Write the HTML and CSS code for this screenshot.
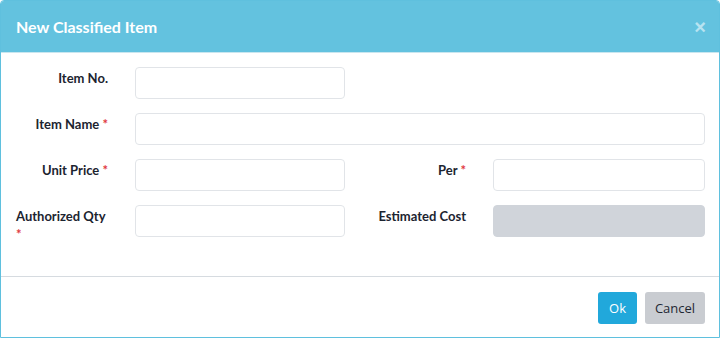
FILE: index.html
```html
<!DOCTYPE html>
<html lang="en">
<head>
    <meta charset="UTF-8">
    <meta name="viewport" content="width=device-width, initial-scale=1.0">
    <title>New Classified Item</title>
    <link rel="stylesheet" href="styles.css">
</head>
<body>
    <div class="modal">
        <div class="modal-header">
            <h4>New Classified Item</h4>
            <button class="close-btn">&times;</button>
        </div>

        <div class="modal-body">
            <div class="form-grid">
                <!-- Item No. -->
                <label class="field-label"><span>Item No.</span></label>
                <input class="field-input" type="text">
                <div></div>
                <div></div>

                <!-- Item Name -->
                <label class="field-label"><span>Item Name <em>*</em></span></label>
                <input class="field-input wide" type="text">

                <!-- Unit Price / Per -->
                <label class="field-label"><span>Unit Price <em>*</em></span></label>
                <input class="field-input" type="text">
                <label class="field-label"><span>Per <em>*</em></span></label>
                <input class="field-input" type="text">

                <!-- Authorized Qty / Estimated Cost -->
                <label class="field-label"><span>Authorized Qty <em>*</em></span></label>
                <input class="field-input" type="text">
                <label class="field-label"><span>Estimated Cost</span></label>
                <input class="field-input" type="text" disabled>
            </div>
        </div>

        <div class="modal-footer">
            <button class="btn btn-ok">Ok</button>
            <button class="btn btn-cancel">Cancel</button>
        </div>
    </div>
</body>
</html>
```

FILE: styles.css
```css
body {
    font-family: Lato, "Open Sans", sans-serif;
    margin: 0;
    background-color: #ffffff;
}
.modal {
    width: 720px;
    height: 338px;
    box-sizing: border-box;
    border: 1px solid #5fc0de;
    border-radius: 4px 4px 0 0;
    display: flex;
    flex-direction: column;
    overflow: hidden;
}
.modal-header {
    background: #63c2df;
    height: 51px;
    border-bottom: 1px solid #c9e6ef;
    display: flex;
    align-items: center;
    justify-content: space-between;
    padding: 0 15px;
    flex-shrink: 0;
}
.modal-header h4 {
    margin: 0;
    color: #ffffff;
    font-size: 16px;
    font-weight: bold;
}
.close-btn {
    background: none;
    border: none;
    padding: 0;
    color: #b8e3f1;
    font-size: 20px;
    font-weight: bold;
    font-family: Arial, "Liberation Sans", sans-serif;
    line-height: 1;
    cursor: pointer;
    margin-right: -2px;
}
.modal-body {
    flex: 1;
    padding: 14px 14px 0 15px;
}
.form-grid {
    display: grid;
    grid-template-columns: 94px 210px 98px 1fr;
    column-gap: 25px;
    row-gap: 14px;
}
.field-label {
    display: flex;
    justify-content: flex-end;
    padding: 2px 2px 0 0;
    font-size: 13px;
    font-weight: bold;
    color: #1c2430;
    line-height: 18px;
}
.field-label span {
    text-align: left;
}
.field-label em {
    font-style: normal;
    color: #e0383e;
}
.field-input {
    height: 32px;
    box-sizing: border-box;
    border: 1px solid #e1e4e8;
    border-radius: 4px;
    background: #ffffff;
    font-size: 13px;
    padding: 0 10px;
    min-width: 0;
}
.field-input.wide {
    grid-column: 2 / 5;
}
.field-input:disabled {
    background: #d0d4da;
    border-color: #d0d4da;
}
.modal-footer {
    border-top: 1px solid #d6dbe0;
    display: flex;
    justify-content: flex-end;
    gap: 8px;
    padding: 15px 14px 13px 0;
}
.btn {
    height: 32px;
    border: none;
    border-radius: 3px;
    font-family: "Open Sans", sans-serif;
    font-size: 13px;
    padding: 0 11px;
    cursor: pointer;
}
.btn-ok {
    background: #21a8db;
    color: #ffffff;
    width: 39px;
    padding: 0;
}
.btn-cancel {
    background: #c9ccd1;
    color: #1f2733;
    width: 60px;
    padding: 0;
}
```
